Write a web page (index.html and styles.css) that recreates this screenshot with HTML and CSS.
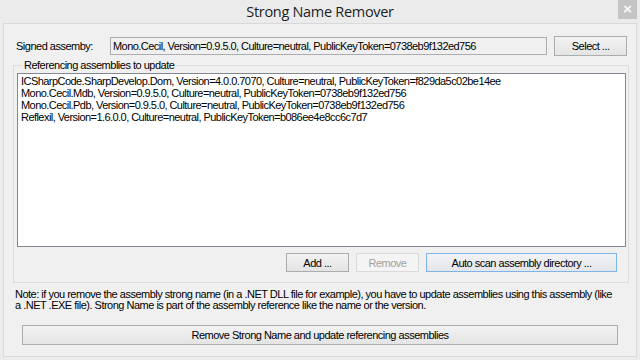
FILE: index.html
```html
<!DOCTYPE html>
<html>
<head>
    <title>Strong Name Remover</title>
    <link rel="stylesheet" href="styles.css">
</head>
<body>
    <div class="window">
        <div class="titlebar">
            <span class="title">Strong Name Remover</span>
            <span class="close-btn">&times;</span>
        </div>

        <div class="client">
            <div class="signed-row">
                <span class="signed-label">Signed assemby:</span>
                <div class="textbox">Mono.Cecil, Version=0.9.5.0, Culture=neutral, PublicKeyToken=0738eb9f132ed756</div>
                <button class="button select-btn">Select ...</button>
            </div>

            <fieldset class="group">
                <legend>Referencing assemblies to update</legend>
                <div class="listbox">
                    <div class="list-item">ICSharpCode.SharpDevelop.Dom, Version=4.0.0.7070, Culture=neutral, PublicKeyToken=f829da5c02be14ee</div>
                    <div class="list-item">Mono.Cecil.Mdb, Version=0.9.5.0, Culture=neutral, PublicKeyToken=0738eb9f132ed756</div>
                    <div class="list-item">Mono.Cecil.Pdb, Version=0.9.5.0, Culture=neutral, PublicKeyToken=0738eb9f132ed756</div>
                    <div class="list-item">Reflexil, Version=1.6.0.0, Culture=neutral, PublicKeyToken=b086ee4e8cc6c7d7</div>
                </div>
                <div class="button-row">
                    <button class="button add-btn">Add ...</button>
                    <button class="button remove-btn" disabled>Remove</button>
                    <button class="button scan-btn">Auto scan assembly directory ...</button>
                </div>
            </fieldset>

            <p class="note">Note: if you remove the assembly strong name (in a .NET DLL file for example), you have to update assemblies using this assembly (like<br>a .NET .EXE file). Strong Name is part of the assembly reference like the name or the version.</p>

            <div class="action-row">
                <button class="button action-btn">Remove Strong Name and update referencing assemblies</button>
            </div>
        </div>
    </div>
</body>
</html>
```

FILE: styles.css
```css
html, body {
    margin: 0;
    padding: 0;
}

body {
    width: 640px;
    height: 360px;
    overflow: hidden;
    background-color: #ebebeb;
    font-family: "Liberation Sans", Arial, sans-serif;
    font-size: 11px;
    color: #000;
}

.window {
    display: flex;
    flex-direction: column;
    width: 640px;
    height: 360px;
}

/* Title bar */
.titlebar {
    position: relative;
    height: 23px;
    flex-shrink: 0;
    display: flex;
    justify-content: center;
    align-items: center;
}

.title {
    font-family: "Open Sans", "Noto Sans", sans-serif;
    font-size: 14.5px;
    letter-spacing: -0.3px;
    color: #1e1e1e;
    margin-top: -1px;
}

.close-btn {
    position: absolute;
    top: 0;
    right: 3px;
    width: 19px;
    height: 19px;
    background-color: #c4c4c4;
    color: #fff;
    font-family: "DejaVu Sans", sans-serif;
    font-size: 13px;
    font-weight: bold;
    line-height: 18px;
    text-align: center;
}

/* Client area */
.client {
    flex: 1;
    margin: 0 3px 3px 3px;
    padding: 12px 7px 0 9px;
    border: 1px solid #d9d9d9;
    background-color: #f0f0f0;
}

.signed-row {
    display: flex;
    align-items: center;
    height: 20px;
    padding: 0 2px 0 3px;
}

.signed-label {
    width: 94px;
    flex-shrink: 0;
    letter-spacing: -0.5px;
}

.textbox {
    width: 435px;
    height: 16px;
    line-height: 16px;
    padding-left: 2px;
    border: 1px solid #abadb3;
    background-color: #f0f0f0;
    white-space: nowrap;
    overflow: hidden;
    letter-spacing: -0.55px;
}

/* Buttons */
.button {
    height: 19px;
    padding: 0;
    border: 1px solid #acacac;
    background: linear-gradient(#f2f2f2, #e4e4e4);
    font-family: "Liberation Sans", Arial, sans-serif;
    font-size: 11px;
    color: #000;
    letter-spacing: -0.5px;
    cursor: pointer;
}

.select-btn {
    width: 73px;
    height: 20px;
    margin-left: 7px;
}

.add-btn {
    width: 63px;
}

.remove-btn {
    width: 63px;
    margin-left: 7px;
    border-color: #d9d9d9;
    background: #f4f4f4;
    color: #a0a0a0;
}

.scan-btn {
    width: 191px;
    margin-left: 7px;
    border-color: #7eb4ea;
    background: linear-gradient(#f0f2f5, #e4e6e9);
}

/* Group box */
.group {
    margin: 3px 0 0 0;
    padding: 1px 2px 10px 2px;
    border: 1px solid #dcdcdc;
}

.group legend {
    margin-left: 6px;
    padding: 0 2px;
    line-height: 13px;
    letter-spacing: -0.5px;
}

.listbox {
    height: 170px;
    margin-left: 1px;
    border: 1px solid #828790;
    background-color: #fff;
    padding: 1px 3px;
}

.list-item {
    height: 12px;
    line-height: 12px;
    white-space: nowrap;
    letter-spacing: -0.55px;
}

.button-row {
    display: flex;
    justify-content: flex-end;
    margin-top: 6px;
    padding-right: 9px;
}

/* Note */
.note {
    margin: 6px 0 0 2px;
    line-height: 11px;
    letter-spacing: -0.5px;
}

.action-row {
    margin-top: 14px;
    padding-left: 9px;
}

.action-btn {
    width: 596px;
    height: 20px;
}
```
